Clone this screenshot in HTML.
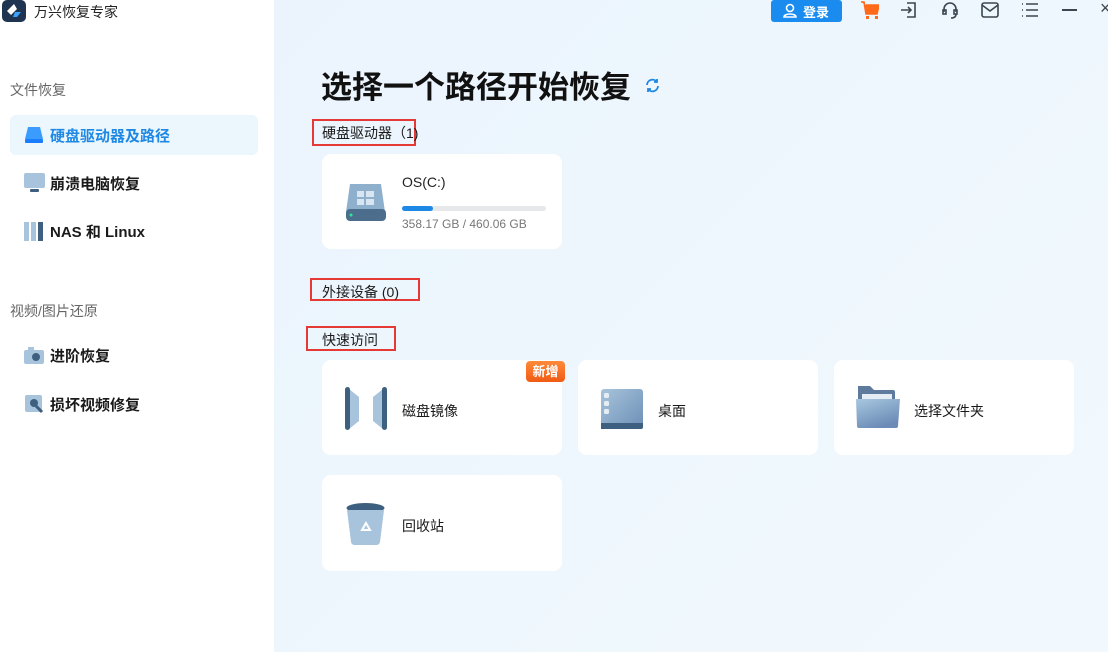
<!DOCTYPE html>
<html><head><meta charset="utf-8"><style>
*{margin:0;padding:0;box-sizing:border-box}
body{width:1108px;height:652px;overflow:hidden;font-family:"Liberation Sans","Noto Sans CJK SC",sans-serif;background:linear-gradient(135deg,#eaf3fd,#eef7fd 60%,#f2f9fe);position:relative;color:#222}
.side{position:absolute;left:0;top:0;width:274px;height:652px;background:#fff}
.a{position:absolute}
.card{position:absolute;background:#fff;border-radius:9px}
.red{position:absolute;border:2px solid #e53935}
.lbl{font-size:14px;color:#1a1a1a}
.nav{position:absolute;left:50px;font-size:15px;font-weight:bold;color:#1a1a1a}
.sec{position:absolute;left:10px;font-size:14px;color:#666}
</style></head><body>
<div class="side">
 <div class="a" style="left:2px;top:0;width:24px;height:22px;background:#1e3450;border-radius:5px"></div>
 <svg class="a" style="left:5px;top:3px" width="18" height="16"><path d="M9 1 L2 8 L6 12 L12 6Z" fill="#fff"/><path d="M10 9 L16 9 L12 14 L8 14Z" fill="#3aa2ff"/></svg>
 <div class="a" style="left:34px;top:2px;font-size:14px;color:#222">万兴恢复专家</div>
 <div class="sec" style="top:80px">文件恢复</div>
 <div class="a" style="left:10px;top:115px;width:248px;height:40px;background:#ebf6fd;border-radius:6px"></div>
 <svg class="a" style="left:24px;top:126px" width="20" height="18"><path d="M4 1h12l3 12H1z" fill="#3b9cff"/><rect x="1" y="13" width="18" height="4" rx="1" fill="#1a7dff"/></svg>
 <div class="nav" style="top:125px;color:#1e88e5">硬盘驱动器及路径</div>
 <svg class="a" style="left:24px;top:173px" width="21" height="20"><rect x="0" y="0" width="21" height="15" rx="2" fill="#a8c4dc"/><rect x="6" y="16" width="9" height="3" rx="1" fill="#3e5f80"/></svg>
 <div class="nav" style="top:173px">崩溃电脑恢复</div>
 <svg class="a" style="left:24px;top:222px" width="20" height="19"><rect x="0" y="0" width="5" height="19" fill="#a8c4dc"/><rect x="7" y="0" width="5" height="19" fill="#a8c4dc"/><rect x="14" y="0" width="5" height="19" fill="#3e5f80"/></svg>
 <div class="nav" style="top:221px">NAS 和 Linux</div>
 <div class="sec" style="top:301px">视频/图片还原</div>
 <svg class="a" style="left:24px;top:347px" width="20" height="17"><rect x="0" y="3" width="20" height="14" rx="2" fill="#a8c4dc"/><rect x="4" y="0" width="6" height="4" fill="#a8c4dc"/><circle cx="12" cy="10" r="4" fill="#3e5f80"/></svg>
 <div class="nav" style="top:345px">进阶恢复</div>
 <svg class="a" style="left:25px;top:395px" width="19" height="19"><rect x="0" y="0" width="17" height="17" rx="2" fill="#a8c4dc"/><circle cx="9" cy="8" r="4" fill="#3e5f80"/><path d="M11 11l6 6" stroke="#3e5f80" stroke-width="3"/></svg>
 <div class="nav" style="top:394px">损坏视频修复</div>
</div>
<div class="a" style="left:771px;top:0;width:71px;height:22px;background:#1a8cf0;border-radius:3px;color:#fff;font-size:13px;font-weight:bold;padding:2px 0 0 32px">登录</div>
<svg class="a" style="left:783px;top:3px" width="14" height="15"><circle cx="7" cy="5" r="3.5" fill="none" stroke="#fff" stroke-width="1.6"/><path d="M1 14c0-4 12-4 12 0z" fill="none" stroke="#fff" stroke-width="1.6"/></svg>
<svg class="a" style="left:861px;top:1px" width="18" height="18"><path d="M0 1h3l2 12h11l2-9H5" fill="#ff6a1a" stroke="#ff6a1a" stroke-width="1.6"/><rect x="5" y="15" width="3" height="3" fill="#ff6a1a"/><rect x="14" y="15" width="3" height="3" fill="#ff6a1a"/></svg>
<svg class="a" style="left:900px;top:1px" width="18" height="18" fill="none" stroke="#3b4650" stroke-width="1.6"><path d="M7 2h8v14H7M1 9h10M8 6l3 3-3 3"/></svg>
<svg class="a" style="left:941px;top:1px" width="18" height="18" fill="none" stroke="#3b4650" stroke-width="1.6"><path d="M3 11V8a6 6 0 0112 0v3"/><rect x="2" y="9" width="3" height="4"/><rect x="13" y="9" width="3" height="4"/><path d="M15 13q0 4-5 4"/></svg>
<svg class="a" style="left:981px;top:1px" width="18" height="18" fill="none" stroke="#3b4650" stroke-width="1.6"><rect x="1" y="2" width="16" height="14" rx="2"/><path d="M1 4l8 6 8-6"/></svg>
<svg class="a" style="left:1021px;top:2px" width="18" height="16" fill="none" stroke="#3b4650" stroke-width="1.6"><path d="M1 2h1M5 2h12M1 8h1M5 8h12M1 14h1M5 14h12"/></svg>
<div class="a" style="left:1062px;top:9px;width:15px;height:2px;background:#3b4650"></div>
<div class="a" style="left:1100px;top:-2px;font-size:18px;color:#3b4650">×</div>
<div class="a" style="left:321px;top:62px;font-size:31px;font-weight:bold;color:#111">选择一个路径开始恢复</div>
<svg class="a" style="left:645px;top:78px" width="15" height="15" fill="none" stroke="#1e88e5" stroke-width="1.8"><path d="M2 7a5.5 5.5 0 0110-3M13 8a5.5 5.5 0 01-10 3"/><path d="M12 1v3H9M3 14v-3h3"/></svg>
<div class="red" style="left:312px;top:119px;width:104px;height:27px"></div>
<div class="a lbl" style="left:322px;top:123px">硬盘驱动器（1)</div>
<div class="card" style="left:322px;top:154px;width:240px;height:95px"></div>
<svg class="a" style="left:345px;top:182px" width="41" height="40"><path d="M5 2h31l4 28H1z" fill="#8fb0cc"/><rect x="1" y="27" width="40" height="12" rx="4" fill="#4d6d8c"/><rect x="12" y="9" width="7" height="6" fill="#d8e6f2"/><rect x="21" y="9" width="8" height="6" fill="#d8e6f2"/><rect x="12" y="17" width="7" height="6" fill="#d8e6f2"/><rect x="21" y="17" width="8" height="6" fill="#d8e6f2"/><circle cx="6" cy="33" r="1.5" fill="#2de59a"/></svg>
<div class="a" style="left:402px;top:174px;font-size:14px;color:#222">OS(C:)</div>
<div class="a" style="left:402px;top:206px;width:144px;height:5px;background:#e6e8ea;border-radius:3px"><div style="width:31px;height:5px;background:#1e88e5;border-radius:3px"></div></div>
<div class="a" style="left:402px;top:217px;font-size:12px;color:#777">358.17 GB / 460.06 GB</div>
<div class="red" style="left:310px;top:278px;width:110px;height:23px"></div>
<div class="a lbl" style="left:322px;top:282px">外接设备 (0)</div>
<div class="red" style="left:306px;top:326px;width:90px;height:25px"></div>
<div class="a lbl" style="left:322px;top:330px">快速访问</div>
<div class="card" style="left:322px;top:360px;width:240px;height:95px"></div>
<div class="card" style="left:578px;top:360px;width:240px;height:95px"></div>
<div class="card" style="left:834px;top:360px;width:240px;height:95px"></div>
<div class="card" style="left:322px;top:475px;width:240px;height:96px"></div>
<div class="a" style="left:526px;top:361px;width:39px;height:21px;background:linear-gradient(#ff8a3a,#f05a14);border-radius:4px;color:#fff;font-size:13px;font-weight:bold;text-align:center;line-height:21px">新增</div>
<svg class="a" style="left:344px;top:387px" width="44" height="44"><path d="M5 2l10 8v24l-10 8z" fill="#a8c4dc"/><path d="M39 2l-10 8v24l10 8z" fill="#a8c4dc"/><rect x="1" y="0" width="5" height="43" rx="2.5" fill="#3e6080"/><rect x="38" y="0" width="5" height="43" rx="2.5" fill="#3e6080"/></svg>
<div class="a lbl" style="left:402px;top:401px">磁盘镜像</div>
<svg class="a" style="left:600px;top:387px" width="44" height="42"><defs><linearGradient id="g1" x1="0" y1="0" x2="1" y2="1"><stop offset="0" stop-color="#a8c4dc"/><stop offset="1" stop-color="#6c8fb6"/></linearGradient></defs><rect x="1" y="2" width="42" height="40" rx="3" fill="url(#g1)"/><path d="M1 36h42v4a2 2 0 01-2 2H1z" fill="#3e6080"/><rect x="4" y="6" width="5" height="5" rx="1.5" fill="#e6eef5"/><rect x="4" y="14" width="5" height="5" rx="1.5" fill="#e6eef5"/><rect x="4" y="22" width="5" height="5" rx="1.5" fill="#e6eef5"/></svg>
<div class="a lbl" style="left:658px;top:401px">桌面</div>
<svg class="a" style="left:855px;top:386px" width="46" height="42"><path d="M3 0h12l4 4h19a2 2 0 012 2v12H3z" fill="#5e7a9c"/><rect x="7" y="8" width="30" height="10" fill="#e4ecf4"/><defs><linearGradient id="g2" x1="0" y1="0" x2="0.5" y2="1"><stop offset="0" stop-color="#a8c8e0"/><stop offset="1" stop-color="#6c8bb6"/></linearGradient></defs><path d="M1 13h44l-2 27a2 2 0 01-2 2H4a2 2 0 01-2-2z" fill="url(#g2)"/></svg>
<div class="a lbl" style="left:914px;top:401px">选择文件夹</div>
<svg class="a" style="left:345px;top:502px" width="41" height="44"><ellipse cx="20.5" cy="6" rx="19" ry="5" fill="#3e6080"/><path d="M2 8h37l-4 32a4 4 0 01-4 3H10a4 4 0 01-4-3z" fill="#a8c4dc"/><path d="M17 28l4-7 4 7z" fill="none" stroke="#fff" stroke-width="2"/></svg>
<div class="a lbl" style="left:402px;top:516px">回收站</div>
</body></html>
